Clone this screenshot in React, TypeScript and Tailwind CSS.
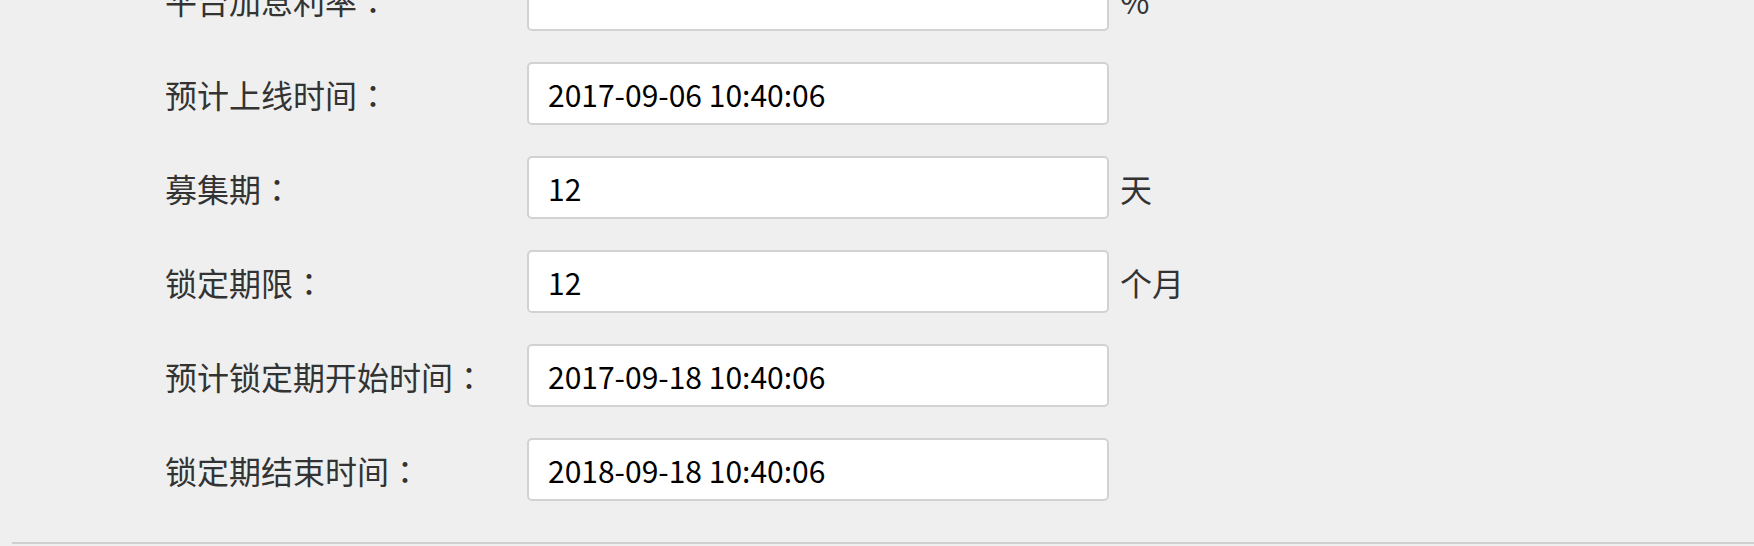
const ROWS = [
  { label: "平台加息利率", value: "", unit: "%" },
  { label: "预计上线时间", value: "2017-09-06 10:40:06", unit: "" },
  { label: "募集期", value: "12", unit: "天" },
  { label: "锁定期限", value: "12", unit: "个月" },
  { label: "预计锁定期开始时间", value: "2017-09-18 10:40:06", unit: "" },
  { label: "锁定期结束时间", value: "2018-09-18 10:40:06", unit: "" },
];

export default function App() {
  return (
    <div className="h-[546px] w-full overflow-hidden bg-[#efefef] font-['Noto_Sans_CJK_SC',sans-serif]">
      <div className="-mt-[32px] flex flex-col gap-[31px] pl-[165px]">
        {ROWS.map((row) => (
          <div key={row.label} className="flex items-center">
            <span className="w-[362px] text-[32px] leading-none text-[#333]">
              {row.label}
              <span className="font-['Noto_Sans_CJK_TC',sans-serif]">：</span>
            </span>
            <input
              readOnly
              value={row.value}
              className="h-[63px] w-[582px] rounded-[5px] border-2 border-[#d2d2d2] bg-white pl-[19px] text-[30px] text-black outline-none"
            />
            {row.unit && (
              <span className="ml-[11px] text-[32px] leading-none text-[#333]">{row.unit}</span>
            )}
          </div>
        ))}
      </div>
      <div className="ml-[12px] mt-[41px] h-[2px] bg-[#cfcfcf]" />
    </div>
  );
}
